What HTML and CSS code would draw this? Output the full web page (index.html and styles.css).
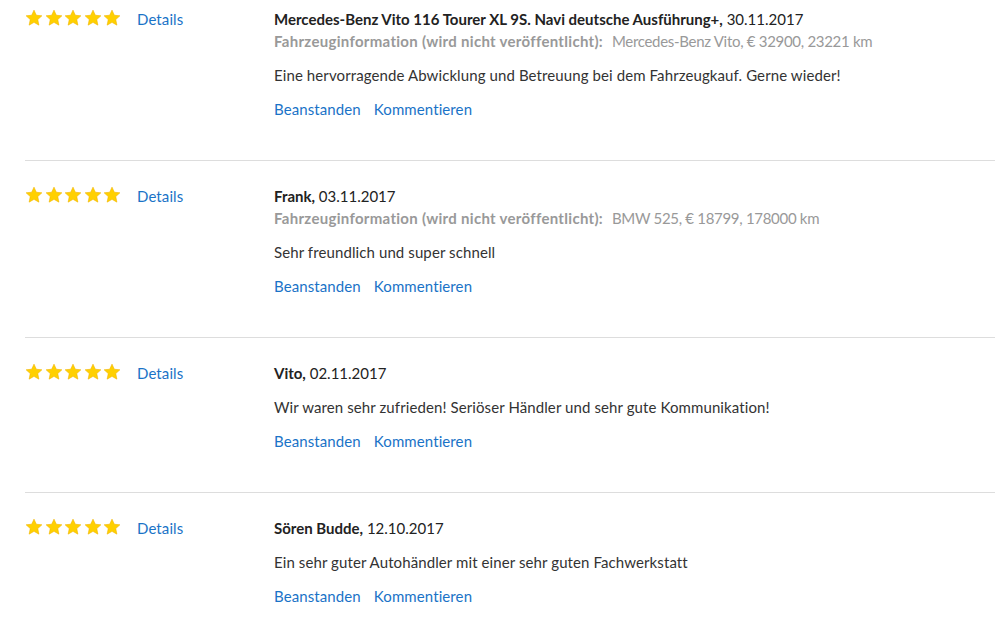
FILE: index.html
```html
<!DOCTYPE html>
<html lang="de">
<head>
  <meta charset="UTF-8">
  <title>Bewertungen</title>
  <link rel="stylesheet" href="styles.css">
</head>
<body>
  <svg width="0" height="0" class="defs">
    <symbol id="star" viewBox="0 0 24 24">
      <polygon points="12,1.5 15.1,8.3 22.5,9.1 17,14.1 18.5,21.5 12,17.8 5.5,21.5 7,14.1 1.5,9.1 8.9,8.3" fill="#ffd000" stroke="#f2b600" stroke-width="0.8" stroke-linejoin="round"/>
    </symbol>
  </svg>
  <div class="reviews">

    <div class="review">
      <div class="rating">
        <span class="stars">
          <svg><use href="#star"/></svg><svg><use href="#star"/></svg><svg><use href="#star"/></svg><svg><use href="#star"/></svg><svg><use href="#star"/></svg>
        </span>
        <a class="details" href="#">Details</a>
      </div>
      <div class="content">
        <div class="title"><b>Mercedes-Benz Vito 116 Tourer XL 9S. Navi deutsche Ausführung+,</b> 30.11.2017</div>
        <div class="vehicle"><b>Fahrzeuginformation (wird nicht veröffentlicht):</b> <span>Mercedes-Benz Vito, € 32900, 23221 km</span></div>
        <p class="text">Eine hervorragende Abwicklung und Betreuung bei dem Fahrzeugkauf. Gerne wieder!</p>
        <div class="actions"><a href="#">Beanstanden</a><a href="#">Kommentieren</a></div>
      </div>
    </div>

    <div class="review">
      <div class="rating">
        <span class="stars">
          <svg><use href="#star"/></svg><svg><use href="#star"/></svg><svg><use href="#star"/></svg><svg><use href="#star"/></svg><svg><use href="#star"/></svg>
        </span>
        <a class="details" href="#">Details</a>
      </div>
      <div class="content">
        <div class="title"><b>Frank,</b> 03.11.2017</div>
        <div class="vehicle"><b>Fahrzeuginformation (wird nicht veröffentlicht):</b> <span>BMW 525, € 18799, 178000 km</span></div>
        <p class="text">Sehr freundlich und super schnell</p>
        <div class="actions"><a href="#">Beanstanden</a><a href="#">Kommentieren</a></div>
      </div>
    </div>

    <div class="review">
      <div class="rating">
        <span class="stars">
          <svg><use href="#star"/></svg><svg><use href="#star"/></svg><svg><use href="#star"/></svg><svg><use href="#star"/></svg><svg><use href="#star"/></svg>
        </span>
        <a class="details" href="#">Details</a>
      </div>
      <div class="content">
        <div class="title"><b>Vito,</b> 02.11.2017</div>
        <p class="text">Wir waren sehr zufrieden! Seriöser Händler und sehr gute Kommunikation!</p>
        <div class="actions"><a href="#">Beanstanden</a><a href="#">Kommentieren</a></div>
      </div>
    </div>

    <div class="review">
      <div class="rating">
        <span class="stars">
          <svg><use href="#star"/></svg><svg><use href="#star"/></svg><svg><use href="#star"/></svg><svg><use href="#star"/></svg><svg><use href="#star"/></svg>
        </span>
        <a class="details" href="#">Details</a>
      </div>
      <div class="content">
        <div class="title"><b>Sören Budde,</b> 12.10.2017</div>
        <p class="text">Ein sehr guter Autohändler mit einer sehr guten Fachwerkstatt</p>
        <div class="actions"><a href="#">Beanstanden</a><a href="#">Kommentieren</a></div>
      </div>
    </div>

  </div>
</body>
</html>
```

FILE: styles.css
```css
body {
  margin: 0;
  padding: 8px 0 0 25px;
  font-family: Lato, "Noto Sans", sans-serif;
  font-size: 15px;
  line-height: 22px;
  color: #333;
  background: #fff;
}
.defs {
  position: absolute;
}
a {
  color: #1a73c7;
  text-decoration: none;
  letter-spacing: 0.1px;
}
.review {
  display: flex;
  padding: 24px 0 40px;
  border-bottom: 1px solid #ddd;
}
.review:first-child {
  padding-top: 0;
}
.review:last-child {
  border-bottom: none;
}
.rating {
  width: 249px;
  display: flex;
  align-items: flex-start;
}
.stars {
  display: flex;
  gap: 1.5px;
  width: 112px;
  height: 22px;
  align-items: center;
  margin-top: -1px;
}
.stars svg {
  width: 18px;
  height: 18px;
}
.content {
  flex: 1;
}
.title {
  color: #222;
}
.title b {
  font-weight: 700;
}
.vehicle {
  color: #999;
}
.vehicle b {
  font-weight: 700;
  letter-spacing: 0.3px;
  margin-right: 5px;
}
.vehicle span {
  letter-spacing: -0.3px;
}
.text {
  margin: 12px 0 0;
  letter-spacing: 0.1px;
}
.actions {
  margin-top: 12px;
  display: flex;
  gap: 13px;
}
```
